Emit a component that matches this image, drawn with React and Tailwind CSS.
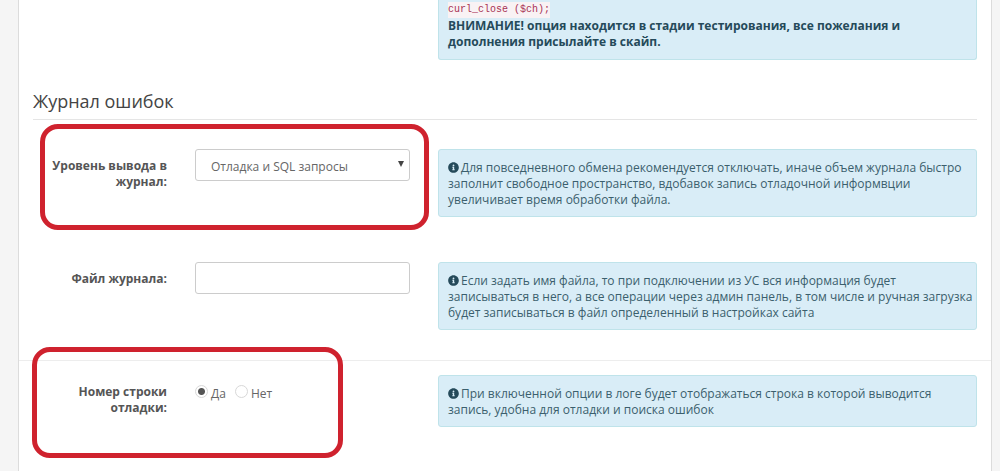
import { FaInfoCircle } from "react-icons/fa";

const levels = ["Отладка и SQL запросы", "Только ошибки", "Отключено"];

const Hint = ({ children }) => (
  <div className="mb-4 rounded-[3px] border border-[#bfe3ea] bg-[#d9edf7] pt-[10px] pr-[2px] pb-2 pl-[9px] text-[#3b5f6d]">
    <FaInfoCircle className="mr-[2px] inline-block size-[11px] align-[-1px] text-[#254a5a]" />
    {children}
  </div>
);

const FormGroup = ({ label, htmlFor, hint, bordered, mark, children }) => {
  const labelClass =
    "block w-2/12 px-[14px] pt-[9px] text-right font-bold text-[#555]";

  return (
    <div
      className={`relative flex items-start pb-[14px] ${
        bordered ? "border-t border-[#ededed] pt-[14px]" : "pt-[15px]"
      }`}
    >
      {htmlFor ? (
        <label htmlFor={htmlFor} className={labelClass}>
          {label}
        </label>
      ) : (
        <span id="line-number-label" className={labelClass}>
          {label}
        </span>
      )}
      <div className="w-3/12 px-[14px]">{children}</div>
      <div className="w-7/12 px-[14px]">
        <Hint>{hint}</Hint>
      </div>
      {mark}
    </div>
  );
};

const Radio = ({ value, defaultChecked, children }) => (
  <label className="flex items-start gap-[3px]">
    <input
      type="radio"
      name="line_number"
      value={value}
      defaultChecked={defaultChecked}
      className="size-[13px] appearance-none rounded-full border border-[#d8d8d8] bg-white bg-[radial-gradient(circle,#555_3px,transparent_4px)] not-checked:bg-none"
    />
    <span className="pt-px">{children}</span>
  </label>
);

const App = () => {
  return (
    <div className="min-h-screen bg-[#f5f5f5] pr-2 pl-[18px] font-['Open_Sans',sans-serif] text-[12px] leading-[16px] text-[#666]">
      <main className="min-h-screen border-x border-[#dcdcdc] bg-white">
        <div className="flex justify-end">
          <div className="w-7/12 px-[14px]">
            <div className="rounded-b-[3px] border border-t-0 border-[#bfe3ea] bg-[#d9edf7] px-[9px] pt-[2px] pb-[9px] text-[#254a5a]">
              <code className="block w-fit bg-[#f9f2f4] font-['Liberation_Mono',monospace] text-[10px] text-[#a83255]">
                curl_close ($ch);
              </code>
              <p className="font-bold">
                ВНИМАНИЕ! опция находится в стадии тестирования, все пожелания и
                дополнения присылайте в скайп.
              </p>
            </div>
          </div>
        </div>

        <form>
          <h2 className="mx-[14px] mt-[29px] mb-[14px] border-b border-[#e5e5e5] pb-[6px] text-[18px] leading-6 text-[#444]">
            Журнал ошибок
          </h2>

          <FormGroup
            label="Уровень вывода в журнал:"
            htmlFor="log-level"
            hint="Для повседневного обмена рекомендуется отключать, иначе объем журнала быстро заполнит свободное пространство, вдобавок запись отладочной информвции увеличивает время обработки файла."
            mark={
              <div className="pointer-events-none absolute -top-[10px] left-[21px] h-[106px] w-2/5 rounded-[18px] border-[5px] border-[#cf222e]" />
            }
          >
            <div className="relative">
              <select
                id="log-level"
                className="h-8 w-full appearance-none rounded-[3px] border border-[#ccc] bg-white pt-1 pl-[15px] text-[#666]"
              >
                {levels.map((level) => (
                  <option key={level}>{level}</option>
                ))}
              </select>
              <svg
                viewBox="0 0 6 6"
                className="pointer-events-none absolute top-3 right-[6px] size-[6px]"
              >
                <path d="M0 0h6L3 6z" fill="#444" />
              </svg>
            </div>
          </FormGroup>

          <FormGroup
            label="Файл журнала:"
            htmlFor="log-file"
            hint="Если задать имя файла, то при подключении из УС вся информация будет записываться в него, а все операции через админ панель, в том числе и ручная загрузка будет записываться в файл определенный в настройках сайта"
          >
            <input
              id="log-file"
              type="text"
              className="block h-8 w-full rounded-[3px] border border-[#ccc] bg-white px-3"
            />
          </FormGroup>

          <FormGroup
            label="Номер строки отладки:"
            bordered
            hint="При включенной опции в логе будет отображаться строка в которой выводится запись, удобна для отладки и поиска ошибок"
            mark={
              <div className="pointer-events-none absolute -top-[14px] left-[13px] h-[111px] w-[32%] rounded-[18px] border-[5px] border-[#cf222e]" />
            }
          >
            <div
              role="radiogroup"
              aria-labelledby="line-number-label"
              className="flex gap-[9px] pt-[10px]"
            >
              <Radio value="1" defaultChecked>
                Да
              </Radio>
              <Radio value="0">Нет</Radio>
            </div>
          </FormGroup>
        </form>
      </main>
    </div>
  );
};

export default App;
